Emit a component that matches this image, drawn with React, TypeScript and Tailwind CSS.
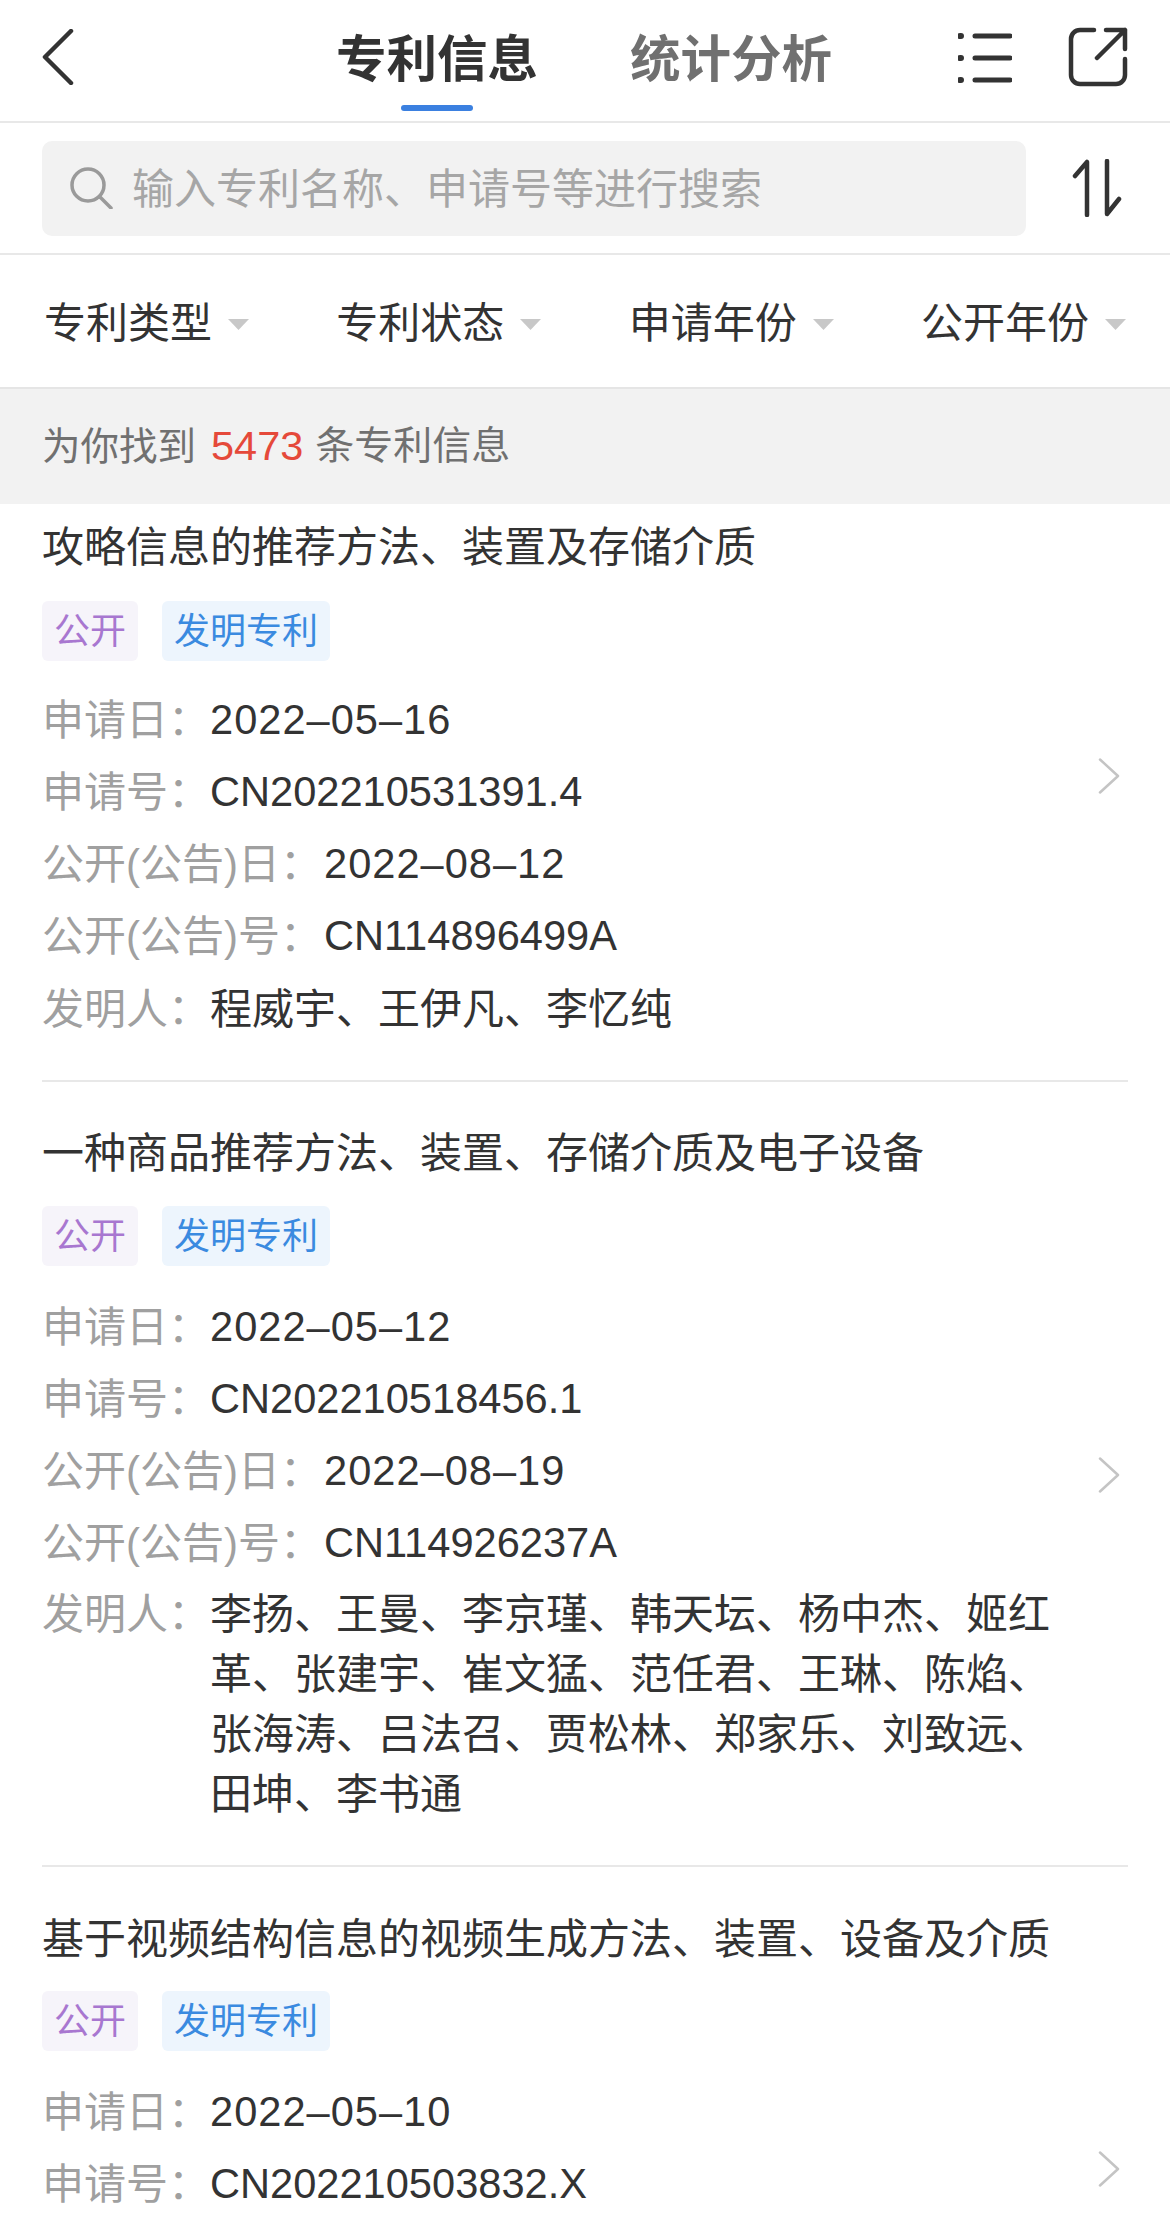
import React from "react";

const font = { fontFamily: '"Liberation Sans","Noto Sans CJK SC",sans-serif' };

type Patent = {
  title: string;
  date: string;
  no: string;
  pubDate: string;
  pubNo: string;
  people: string[];
  chevronClass: string;
  titleClass: string;
  rowsClass: string;
  peopleClass: string;
  divider: boolean;
};

const patents: Patent[] = [
  {
    title: "攻略信息的推荐方法、装置及存储介质",
    date: "2022–05–16",
    no: "CN202210531391.4",
    pubDate: "2022–08–12",
    pubNo: "CN114896499A",
    people: ["程威宇、王伊凡、李忆纯"],
    chevronClass: "top-[254px]",
    titleClass: "pt-[14px] mb-[23px]",
    rowsClass: "pt-[23px]",
    peopleClass: "pt-[8px]",
    divider: true,
  },
  {
    title: "一种商品推荐方法、装置、存储介质及电子设备",
    date: "2022–05–12",
    no: "CN202210518456.1",
    pubDate: "2022–08–19",
    pubNo: "CN114926237A",
    people: [
      "李扬、王曼、李京瑾、韩天坛、杨中杰、姬红",
      "革、张建宇、崔文猛、范任君、王琳、陈焰、",
      "张海涛、吕法召、贾松林、郑家乐、刘致远、",
      "田坤、李书通",
    ],
    chevronClass: "top-[375px]",
    titleClass: "pt-[42px] mb-[22px]",
    rowsClass: "pt-[25px]",
    peopleClass: "pt-[6px]",
    divider: true,
  },
  {
    title: "基于视频结构信息的视频生成方法、装置、设备及介质",
    date: "2022–05–10",
    no: "CN202210503832.X",
    pubDate: "",
    pubNo: "",
    people: [],
    chevronClass: "top-[284px]",
    titleClass: "pt-[43px] mb-[21px]",
    rowsClass: "pt-[25px]",
    peopleClass: "pt-[6px]",
    divider: false,
  },
];

function Row({ label, value, wide, spaced }: { label: string; value: string; wide?: boolean; spaced?: boolean }) {
  return (
    <div className="flex h-[72px] items-center">
      <span className={`text-[#a0a0a0] ${wide ? "w-[282px]" : "w-[168px]"}`}>{label}</span>
      <span className={`text-[41.6px] text-[#333333] ${spaced ? "tracking-[1px]" : ""}`}>{value}</span>
    </div>
  );
}

function Card({ p }: { p: Patent }) {
  return (
    <div className="relative">
      <div className={`text-[42px] leading-[60px] text-[#333333] ${p.titleClass}`}>{p.title}</div>
      <div className="flex gap-[24px] text-[36px]">
        <span className="flex h-[60px] w-[96px] items-center justify-center rounded-[6px] bg-[#f6f4fa] pt-[2px] text-[#a877d0]">公开</span>
        <span className="flex h-[60px] w-[168px] items-center justify-center rounded-[6px] bg-[#edf5fd] pt-[2px] text-[#3a8ae0]">发明专利</span>
      </div>
      <div className={`text-[42px] ${p.rowsClass}`}>
        <Row label="申请日：" value={p.date} spaced />
        <Row label="申请号：" value={p.no} />
        {p.pubDate && <Row label="公开(公告)日：" value={p.pubDate} wide spaced />}
        {p.pubNo && <Row label="公开(公告)号：" value={p.pubNo} wide />}
        {p.people.length > 0 && (
          <div className={`flex ${p.peopleClass}`}>
            <span className="w-[168px] shrink-0 leading-[60px] text-[#a0a0a0]">发明人：</span>
            <div className="text-[#333333]">
              {p.people.map((l) => (
                <div key={l} className="h-[60px] whitespace-nowrap leading-[60px]">{l}</div>
              ))}
            </div>
          </div>
        )}
      </div>
      <svg className={`absolute right-[8px] h-[36px] w-[22px] ${p.chevronClass}`} viewBox="0 0 22 36" fill="none" stroke="#c4c4c4" strokeWidth="2.5" strokeLinecap="round" strokeLinejoin="round">
        <path d="M2 1.5 20 18 2 34.5" />
      </svg>
      {p.divider && <div className="mt-[40px] h-[2px] bg-[#e8e8e8]" />}
    </div>
  );
}

function Filter({ label }: { label: string }) {
  return (
    <div className="flex items-center gap-[15px] pt-[5px] text-[42px] text-[#333333]">
      <span>{label}</span>
      <svg className="h-[12px] w-[23px]" viewBox="0 0 23 12"><path d="M1 1h21L11.5 12z" fill="#c8c8c8" /></svg>
    </div>
  );
}

export default function App() {
  return (
    <div className="h-[2216px] w-[1170px] overflow-hidden bg-white" style={font}>
      <header className="flex h-[123px] items-start border-b-2 border-[#e8e8e8] pt-[27px]">
        <div className="w-[336px] pl-[42px]">
          <svg className="mt-[2px] h-[56px] w-[32px]" viewBox="0 0 32 56" fill="none" stroke="#333" strokeWidth="4.5" strokeLinecap="round" strokeLinejoin="round">
            <path d="M29 2 3 28l26 26" />
          </svg>
        </div>
        <div className="flex w-[496px] gap-[92px] pt-[3px]">
          <div className="flex flex-col items-center">
            <span className="text-[50.5px] leading-[60px] font-bold whitespace-nowrap text-[#333333]">专利信息</span>
            <span className="mt-[15px] h-[6px] w-[72px] rounded-[3px] bg-[#3b80e0]" />
          </div>
          <span className="text-[50.5px] leading-[60px] font-bold whitespace-nowrap text-[#707070]">统计分析</span>
        </div>
        <svg className="ml-[126px] mt-[6px] h-[50px] w-[54px]" viewBox="0 0 54 50" fill="none" stroke="#333" strokeWidth="5" strokeLinecap="round">
          <path d="M17 3h35M17 25h35M17 47h35" />
          <path d="M2 3h1M2 25h1M2 47h1" strokeWidth="6" />
        </svg>
        <svg className="ml-[56px] h-[60px] w-[60px]" viewBox="0 0 60 60" fill="none" stroke="#333" strokeWidth="4.5" strokeLinecap="round" strokeLinejoin="round">
          <path d="M26 3H12a9 9 0 0 0-9 9v36a9 9 0 0 0 9 9h36a9 9 0 0 0 9-9V32" />
          <path d="M29 31 57 3M38 3h19v19" />
        </svg>
      </header>

      <div className="flex h-[132px] items-center border-b-2 border-[#e8e8e8] pr-[46px] pl-[42px]">
        <div className="flex h-[95px] w-[984px] items-center rounded-[10px] bg-[#f2f2f2] pl-[27px]">
          <svg className="h-[42px] w-[44px]" viewBox="0 0 44 42" fill="none" stroke="#9a9a9a" strokeWidth="3.5" strokeLinecap="round">
            <circle cx="19" cy="18" r="16" />
            <path d="M31 30l11 11" />
          </svg>
          <span className="ml-[19px] pt-[3px] text-[42px] text-[#a6a6a6]">输入专利名称、申请号等进行搜索</span>
        </div>
        <svg className="ml-[46px] h-[58px] w-[50px]" viewBox="0 0 50 58" fill="none" stroke="#333" strokeWidth="4.5" strokeLinecap="round" strokeLinejoin="round">
          <path d="M3 17 15 3v53" />
          <path d="M35 2v53l12-15" />
        </svg>
      </div>

      <div className="flex h-[132px] items-center justify-between pr-[43px] pl-[44px]">
        <Filter label="专利类型" />
        <Filter label="专利状态" />
        <Filter label="申请年份" />
        <Filter label="公开年份" />
      </div>

      <div className="flex h-[117px] items-center border-t-2 border-[#e5e5e5] bg-[#f2f2f2] px-[42px] text-[39px] text-[#707070]">
        <span className="text-[38.5px]">为你找到</span>
        <span className="mr-[12px] ml-[15px] text-[41.5px] text-[#e5493a]">5473</span>
        <span>条专利信息</span>
      </div>

      <div className="px-[42px]">
        {patents.map((p) => (
          <Card key={p.title} p={p} />
        ))}
      </div>
    </div>
  );
}
